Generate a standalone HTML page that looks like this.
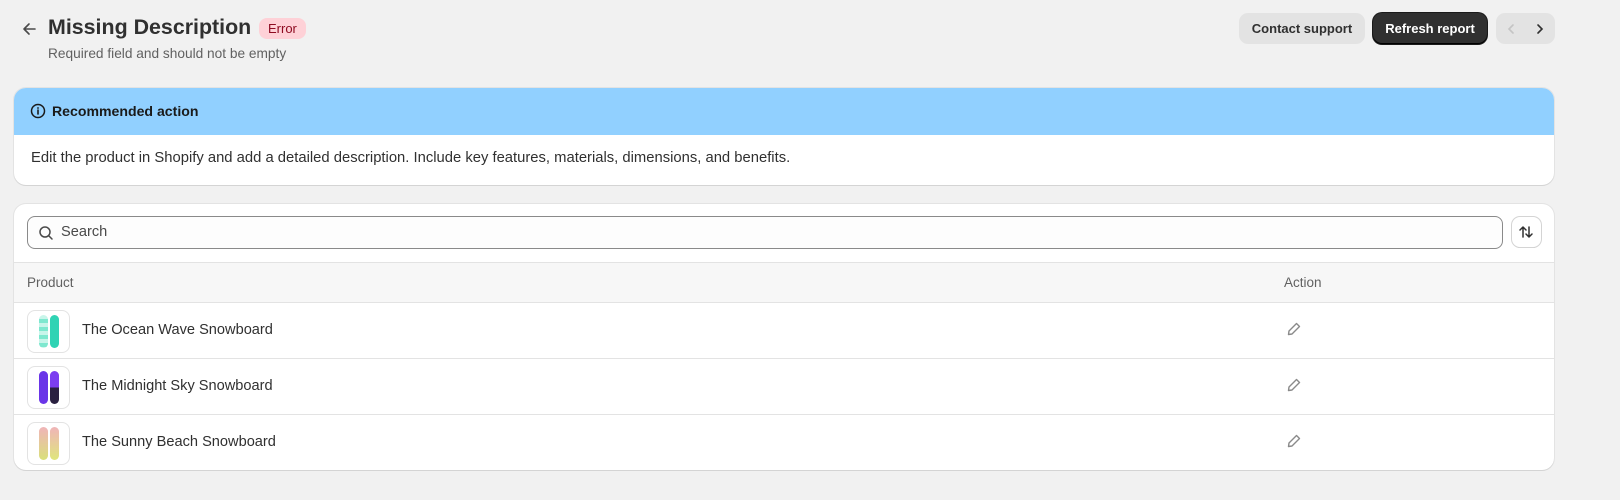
<!DOCTYPE html>
<html><head><meta charset="utf-8"><style>
*{box-sizing:border-box;margin:0;padding:0}
body{width:1620px;height:500px;background:#f1f1f1;font-family:"Liberation Sans",sans-serif;color:#303030;position:relative;overflow:hidden}
.abs{position:absolute}
.btn{position:absolute;top:13px;height:31px;border-radius:9px;font-size:13px;font-weight:bold;display:flex;align-items:center;justify-content:center}
.card{position:absolute;left:14px;width:1540px;background:#fff;border-radius:12px;box-shadow:0 1px 0 #d4d4d4,0 0 0 1px #e3e3e3;overflow:hidden}
.row{position:absolute;left:0;width:1540px;height:56px;border-top:1px solid #e3e3e3}
.thumb{position:absolute;left:13px;top:7px;width:43px;height:43px;border:1px solid #e3e3e3;border-radius:8px;background:#fff}
.bd{position:absolute;top:4px;width:9px;height:33px;border-radius:5px}
.name{position:absolute;left:68px;top:19px;font-size:14.6px;color:#303030}
.pen{position:absolute;left:1272px;top:18px}
</style></head><body>
<svg class="abs" style="left:20px;top:20px" width="18" height="18" viewBox="0 0 18 18"><path d="M15 9H4M9 4L4 9l5 5" fill="none" stroke="#4a4a4a" stroke-width="1.6" stroke-linecap="round" stroke-linejoin="round"/></svg>
<div class="abs" style="left:48px;top:15px;font-size:21.4px;font-weight:bold;color:#303030">Missing Description</div>
<div class="abs" style="left:259px;top:18px;height:21px;padding:0 9px;border-radius:8px;background:#fed1d7;color:#8e0b21;font-size:13px;line-height:21px">Error</div>
<div class="abs" style="left:48px;top:46px;font-size:13.7px;color:#616161">Required field and should not be empty</div>
<div class="btn" style="left:1239px;width:126px;background:#e3e3e3;color:#303030">Contact support</div>
<div class="btn" style="left:1373px;width:114px;background:#303030;color:#fff;box-shadow:inset 0 -1px 0 #000,0 0 0 1px #1a1a1a">Refresh report</div>
<div class="btn" style="left:1496px;width:59px;background:#e3e3e3;justify-content:space-around;font-weight:normal">
<svg width="10" height="12" viewBox="0 0 10 12"><path d="M7 2L3 6l4 4" fill="none" stroke="#c4c4c4" stroke-width="1.6" stroke-linecap="round"/></svg>
<svg width="10" height="12" viewBox="0 0 10 12"><path d="M3 2l4 4-4 4" fill="none" stroke="#303030" stroke-width="1.6" stroke-linecap="round"/></svg></div>

<div class="card" style="top:88px;height:97px">
<div class="abs" style="left:0;top:0;width:1540px;height:47px;background:#91d0ff"></div>
<svg class="abs" style="left:16px;top:15px" width="16" height="16" viewBox="0 0 16 16"><circle cx="8" cy="8" r="6.5" fill="none" stroke="#1a1a1a" stroke-width="1.5"/><path d="M8 7v4" stroke="#1a1a1a" stroke-width="1.6" stroke-linecap="round"/><circle cx="8" cy="5" r="0.9" fill="#1a1a1a"/></svg>
<div class="abs" style="left:38px;top:15px;font-size:14.1px;font-weight:bold;color:#1a1a1a">Recommended action</div>
<div class="abs" style="left:17px;top:62px;font-size:14.8px;color:#303030">Edit the product in Shopify and add a detailed description. Include key features, materials, dimensions, and benefits.</div>
</div>

<div class="card" style="top:204px;height:266px">
<div class="abs" style="left:13px;top:12px;width:1476px;height:33px;border:1px solid #8a8a8a;border-radius:8px;background:#fdfdfd"></div>
<svg class="abs" style="left:24px;top:21px" width="16" height="16" viewBox="0 0 16 16"><circle cx="7" cy="7" r="5" fill="none" stroke="#4a4a4a" stroke-width="1.5"/><path d="M11 11l3 3" stroke="#4a4a4a" stroke-width="1.5" stroke-linecap="round"/></svg>
<div class="abs" style="left:47px;top:20px;font-size:14.6px;color:#4a4a4a">Search</div>
<div class="abs" style="left:1498px;top:13px;width:29px;height:30px;border-radius:8px;background:#fff;box-shadow:0 0 0 1px #d4d4d4,0 1px 0 #b5b5b5"></div>
<svg class="abs" style="left:1504px;top:20px" width="16" height="16" viewBox="0 0 16 16"><path d="M5 13V3M2 6l3-3 3 3M11 3v10M8 10l3 3 3-3" fill="none" stroke="#303030" stroke-width="1.5" stroke-linecap="round" stroke-linejoin="round"/></svg>
<div class="abs" style="left:0;top:58px;width:1540px;height:40px;background:#f7f7f7;border-top:1px solid #e3e3e3"></div>
<div class="abs" style="left:13px;top:71px;font-size:13.5px;color:#616161">Product</div>
<div class="abs" style="left:1270px;top:71px;font-size:13.5px;color:#616161">Action</div>
<div class="row" style="top:98px"><div class="thumb"><div class="bd" style="left:11px;background:repeating-linear-gradient(#c8f5ea 0 4px,#7ee8cf 4px 8px)"></div><div class="bd" style="left:22px;background:#2fd3b4"></div></div><div class="name">The Ocean Wave Snowboard</div>
<svg class="pen" width="16" height="16" viewBox="0 0 16 16"><path d="M10.5 2.5l3 3-7.5 7.5-3.5.5.5-3.5z" fill="none" stroke="#8a8a8a" stroke-width="1.4" stroke-linejoin="round"/></svg></div>
<div class="row" style="top:154px"><div class="thumb"><div class="bd" style="left:11px;background:#6a35e8"></div><div class="bd" style="left:22px;background:linear-gradient(#7c3ef0 50%,#2a2040 50%)"></div></div><div class="name">The Midnight Sky Snowboard</div>
<svg class="pen" width="16" height="16" viewBox="0 0 16 16"><path d="M10.5 2.5l3 3-7.5 7.5-3.5.5.5-3.5z" fill="none" stroke="#8a8a8a" stroke-width="1.4" stroke-linejoin="round"/></svg></div>
<div class="row" style="top:210px"><div class="thumb"><div class="bd" style="left:11px;background:linear-gradient(#f0b4b8,#d9e07a)"></div><div class="bd" style="left:22px;background:linear-gradient(#f0b4b8,#dfe67c)"></div></div><div class="name">The Sunny Beach Snowboard</div>
<svg class="pen" width="16" height="16" viewBox="0 0 16 16"><path d="M10.5 2.5l3 3-7.5 7.5-3.5.5.5-3.5z" fill="none" stroke="#8a8a8a" stroke-width="1.4" stroke-linejoin="round"/></svg></div>
</div>
</body></html>
